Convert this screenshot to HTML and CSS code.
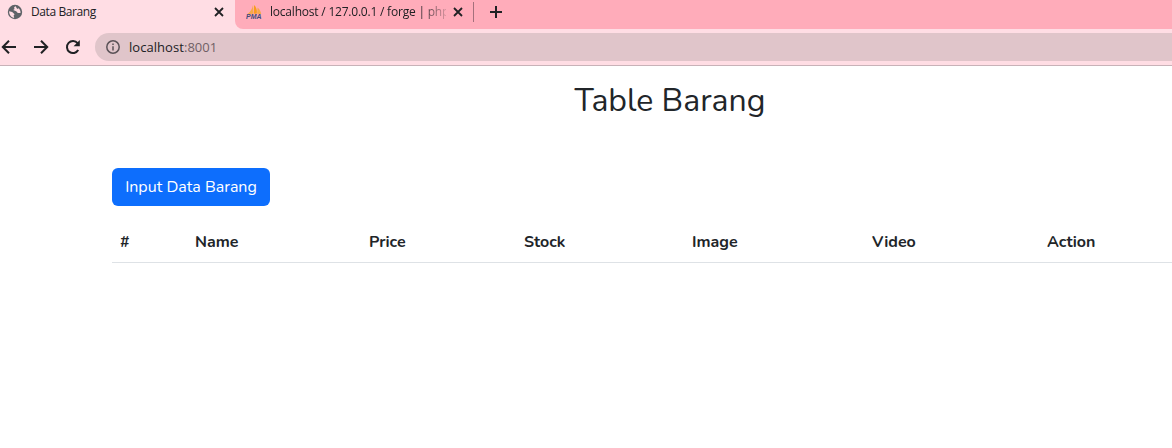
FILE: index.html
```html
<!DOCTYPE html>
<html lang="id">
<head>
<meta charset="utf-8">
<title>Data Barang</title>
<link rel="stylesheet" href="styles.css">
</head>
<body>
<header class="browser">
  <div class="tabs">
    <div class="tab tab-active">
      <svg class="favicon globe" viewBox="0 0 16 16"><circle cx="8" cy="8" r="7.2" fill="#5f6368"/><path d="M2.1 7.2 5.2 8.1 7.6 10.2 6.6 11.5 7.2 13.8C4.5 13.6 2.2 11.2 2.1 7.2ZM8.3 2.1 7 3.8 7.6 5 6.2 6 9.2 7.3 10.8 9 13.5 8.9C13.8 6.9 12.7 5 11.5 4.2L10.2 5 9.5 3.8Z" fill="#ffdde4"/></svg>
      <span class="tab-title"><span class="t-active">Data Barang</span></span>
      <svg class="close" viewBox="0 0 10 10"><path d="M1 1 9 9M9 1 1 9"/></svg>
    </div>
    <div class="tab-strip">
      <div class="tab tab-idle">
        <svg class="favicon pma" viewBox="0 0 16 16"><path d="M6.9 1C6.3 5 4.7 7.6 1.2 10.2L7.2 9.8Z" fill="#f5a94b"/><path d="M8 1C10.8 3.5 11.2 7 10.7 9.8L7.7 9.8Z" fill="#f89c1e"/><path d="M11.6 3.4C13.8 5.6 15 7.6 15.2 10.2L11.1 9.8Z" fill="#f5a94b"/><text class="pma-text" x="0" y="15" textLength="15.5" lengthAdjust="spacingAndGlyphs">PMA</text></svg>
        <span class="tab-title fade"><span class="t-idle">localhost / 127.0.0.1 / forge | php</span></span>
        <svg class="close" viewBox="0 0 10 10"><path d="M1 1 9 9M9 1 1 9"/></svg>
      </div>
      <span class="divider"></span>
      <svg class="plus" viewBox="0 0 12 12"><path d="M6 0V12M0 6H12"/></svg>
    </div>
  </div>
  <div class="toolbar">
    <svg class="nav" viewBox="0 0 16 16"><path d="M15 8H2.3M8 1.8 1.8 8 8 14.2"/></svg>
    <svg class="nav" viewBox="0 0 16 16"><path d="M1 8H13.7M8 1.8 14.2 8 8 14.2"/></svg>
    <svg class="nav" viewBox="0 0 16 16"><path d="M13.2 11A6 6 0 1 1 12.6 4.2"/><path class="tip" d="M14.8 1V7.2H8.6Z"/></svg>
    <div class="omnibox">
      <svg class="info" viewBox="0 0 14 14"><circle cx="7" cy="7" r="6.2"/><path d="M7 6.2V10.5M7 3.4V4.9"/></svg>
      <span class="url"><span class="host">localhost</span>:8001</span>
    </div>
  </div>
</header>
<main class="container">
  <h2 class="heading"><span>Table Barang</span></h2>
  <button class="btn"><span>Input Data Barang</span></button>
  <table class="table">
    <colgroup><col class="c1"><col class="c2"><col class="c3"><col class="c4"><col class="c5"><col class="c6"><col class="c7"></colgroup>
    <thead><tr><th>#</th><th>Name</th><th>Price</th><th>Stock</th><th>Image</th><th>Video</th><th>Action</th></tr></thead>
  </table>
</main>
</body>
</html>
```
FILE: styles.css
```css
* { box-sizing: border-box; }
html { overflow: hidden; }
body { margin: 0; background: #fff; color: #212529; font-family: Nunito, Lato, sans-serif; overflow: hidden; }
svg { display: block; flex: none; }

.browser { height: 66px; background: #ffdde4; border-bottom: 1px solid #c8b2b8; font-family: "Segoe UI", "Open Sans", sans-serif; color: #202124; }
.tabs { display: flex; height: 29px; }
.tab { display: flex; align-items: center; height: 24px; }
.tab-active { width: 235px; padding-left: 7px; }
.tab-strip { display: flex; flex: 1; background: #ffacba; border-bottom-left-radius: 8px; }
.tab-idle { width: 238px; padding-left: 11px; }
.favicon { width: 16px; height: 16px; }
.tab-title { width: 180px; margin-left: 8px; font-size: 12px; line-height: 24px; white-space: nowrap; overflow: hidden; }
.t-active { letter-spacing: -0.4px; }
.t-idle { letter-spacing: -0.21px; }
.fade { width: 176px; -webkit-mask-image: linear-gradient(90deg, #000 148px, transparent 182px); mask-image: linear-gradient(90deg, #000 148px, transparent 182px); }
.close { width: 10px; height: 10px; margin-left: 3px; fill: none; stroke: #202124; stroke-width: 1.8; }
.tab-idle .close { margin-left: 7px; }
.pma-text { font: italic 900 6.5px "Liberation Sans", sans-serif; fill: #414a78; }
.divider { width: 1px; height: 20px; margin-top: 2px; background: #a4707c; }
.plus { width: 12px; height: 12px; margin: 6px 0 0 16px; fill: none; stroke: #202124; stroke-width: 2; }

.toolbar { display: flex; align-items: center; height: 36px; }
.nav { width: 16px; height: 16px; margin-left: 1px; margin-right: 15px; fill: none; stroke: #202124; stroke-width: 2; }
.nav .tip { fill: #202124; stroke: none; }
.omnibox { display: flex; align-items: center; flex: 1; height: 28px; margin-left: -1px; padding-left: 11px; background: #e0c5ca; border-radius: 14px 0 0 14px; }
.info { width: 14px; height: 14px; fill: none; stroke: #5a5257; stroke-width: 1.5; }
.url { margin-left: 9px; font-size: 13px; letter-spacing: 0.05px; color: #705f65; }
.host { color: #202124; }

.container { width: 1116px; margin-left: 112px; padding-top: 15px; }
.heading { margin: 0; height: 38px; text-align: center; font-size: 32px; line-height: 39px; font-weight: 400; }
.btn { display: block; width: 158px; height: 38px; margin-top: 49px; padding: 0; border: 0; border-radius: 6px; background: #0d6efd; color: #fff; font: 400 16px/38px Nunito, Lato, sans-serif; white-space: nowrap; }
.table { width: 1116px; margin-top: 16px; border-collapse: collapse; table-layout: fixed; }
.table th { height: 40px; padding: 0 8px; border-bottom: 1px solid #dee2e6; text-align: left; font-size: 16px; line-height: 24px; font-weight: 700; }
.c1 { width: 75px; }
.c2 { width: 174px; }
.c3 { width: 155px; }
.c4 { width: 168px; }
.c5 { width: 180px; }
.c6 { width: 175px; }
.c7 { width: 189px; }
```
